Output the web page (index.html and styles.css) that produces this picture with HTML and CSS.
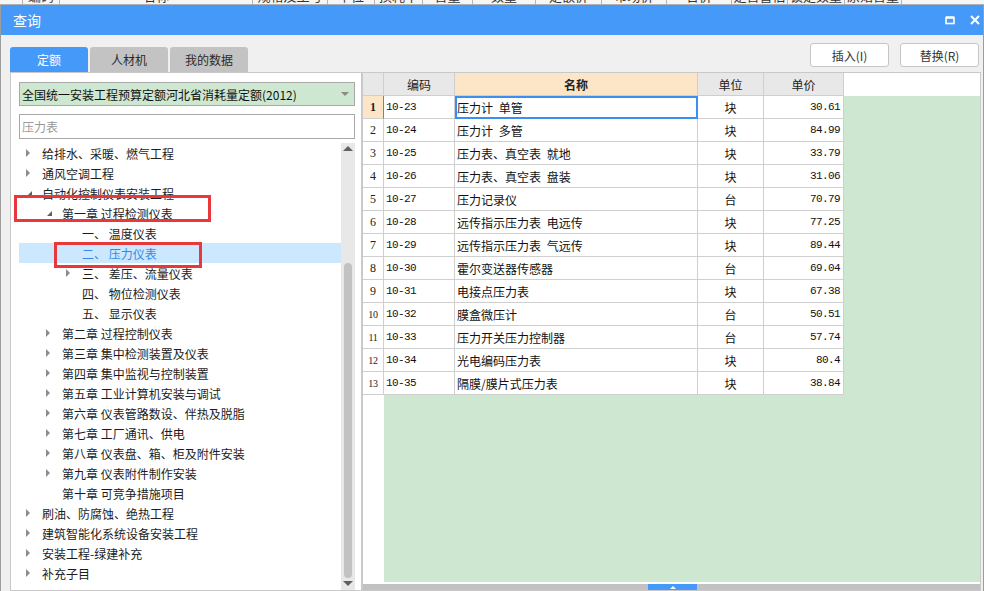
FILE: index.html
```html
<!DOCTYPE html>
<html lang="zh-CN">
<head>
<meta charset="utf-8">
<title>查询</title>
<link rel="stylesheet" href="styles.css">
</head>
<body>
<div class="bgstrip">
  <div class="bgcell"></div>
  <div class="bgcell"><span>编码</span></div>
  <div class="bgcell"><span>名称</span></div>
  <div class="bgcell"><span>规格及型号</span></div>
  <div class="bgcell"><span>单位</span></div>
  <div class="bgcell"><span>损耗率</span></div>
  <div class="bgcell"><span>含量</span></div>
  <div class="bgcell"><span>数量</span></div>
  <div class="bgcell"><span>定额价</span></div>
  <div class="bgcell"><span>市场价</span></div>
  <div class="bgcell"><span>合价</span></div>
  <div class="bgcell"><span>是否暂估</span></div>
  <div class="bgcell"><span>锁定数量</span></div>
  <div class="bgcell"><span>原始含量</span></div>
</div>
<div class="window">
  <div class="titlebar">
    <span class="title">查询</span>
    <div class="winbtns">
      <svg class="ico-max" width="10" height="9" viewBox="0 0 10 9"><rect x="1" y="1.5" width="8" height="6" fill="none" stroke="#fff" stroke-width="1.6"/><line x1="1" y1="1.5" x2="9" y2="1.5" stroke="#fff" stroke-width="2.4"/></svg>
      <svg class="ico-close" width="10" height="10" viewBox="0 0 10 10"><path d="M1 1 L9 9 M9 1 L1 9" stroke="#fff" stroke-width="2" fill="none"/></svg>
    </div>
  </div>
  <div class="content">
    <div class="toolbar">
      <div class="tabs">
        <div class="tab active">定额</div>
        <div class="tab">人材机</div>
        <div class="tab">我的数据</div>
      </div>
      <div class="actions">
        <button class="btn">插入(I)</button>
        <button class="btn">替换(R)</button>
      </div>
    </div>
    <div class="panes">
      <div class="left">
        <div class="select"><span>全国统一安装工程预算定额河北省消耗量定额(2012)</span><i class="caret"></i></div>
        <div class="search">压力表</div>
        <div class="treewrap">
          <div class="tree">
            <div class="row"><i class="tw c"></i>给排水、采暖、燃气工程</div>
            <div class="row"><i class="tw c"></i>通风空调工程</div>
            <div class="row"><i class="tw e"></i>自动化控制仪表安装工程</div>
            <div class="row l1"><i class="tw e"></i>第一章 过程检测仪表</div>
            <div class="row l2"><i class="tw"></i>一、 温度仪表</div>
            <div class="row l2 sel"><i class="tw"></i>二、 压力仪表</div>
            <div class="row l2"><i class="tw c"></i>三、 差压、流量仪表</div>
            <div class="row l2"><i class="tw"></i>四、 物位检测仪表</div>
            <div class="row l2"><i class="tw"></i>五、 显示仪表</div>
            <div class="row l1"><i class="tw c"></i>第二章 过程控制仪表</div>
            <div class="row l1"><i class="tw c"></i>第三章 集中检测装置及仪表</div>
            <div class="row l1"><i class="tw c"></i>第四章 集中监视与控制装置</div>
            <div class="row l1"><i class="tw c"></i>第五章 工业计算机安装与调试</div>
            <div class="row l1"><i class="tw c"></i>第六章 仪表管路数设、伴热及脱脂</div>
            <div class="row l1"><i class="tw c"></i>第七章 工厂通讯、供电</div>
            <div class="row l1"><i class="tw c"></i>第八章 仪表盘、箱、柜及附件安装</div>
            <div class="row l1"><i class="tw c"></i>第九章 仪表附件制作安装</div>
            <div class="row l1"><i class="tw"></i>第十章 可竞争措施项目</div>
            <div class="row"><i class="tw c"></i>刷油、防腐蚀、绝热工程</div>
            <div class="row"><i class="tw c"></i>建筑智能化系统设备安装工程</div>
            <div class="row"><i class="tw c"></i>安装工程-绿建补充</div>
            <div class="row"><i class="tw c"></i>补充子目</div>
          </div>
          <div class="vscroll">
            <i class="arr-up"></i>
            <div class="thumb"></div>
            <i class="arr-down"></i>
          </div>
        </div>
        <div class="mark mark1"></div>
        <div class="mark mark2"></div>
      </div>
      <div class="right">
        <div class="ghead">
          <div class="hc w-n"></div>
          <div class="hc w-c">编码</div>
          <div class="hc w-name name">名称</div>
          <div class="hc w-u">单位</div>
          <div class="hc w-p">单价</div>
          <div class="hfill"></div>
        </div>
        <div class="gbody">
          <div class="rn">
            <div class="cur">1</div>
            <div>2</div><div>3</div><div>4</div><div>5</div><div>6</div><div>7</div><div>8</div><div>9</div>
            <div class="n2">10</div><div class="n2">11</div><div class="n2">12</div><div class="n2">13</div>
          </div>
          <div class="fill">
            <div class="rows">
              <div class="gr"><div class="w-c code">10-23</div><div class="w-name nm focus">压力计 单管</div><div class="w-u un">块</div><div class="w-p pr">30.61</div></div>
              <div class="gr"><div class="w-c code">10-24</div><div class="w-name nm">压力计 多管</div><div class="w-u un">块</div><div class="w-p pr">84.99</div></div>
              <div class="gr"><div class="w-c code">10-25</div><div class="w-name nm">压力表、真空表 就地</div><div class="w-u un">块</div><div class="w-p pr">33.79</div></div>
              <div class="gr"><div class="w-c code">10-26</div><div class="w-name nm">压力表、真空表 盘装</div><div class="w-u un">块</div><div class="w-p pr">31.06</div></div>
              <div class="gr"><div class="w-c code">10-27</div><div class="w-name nm">压力记录仪</div><div class="w-u un">台</div><div class="w-p pr">70.79</div></div>
              <div class="gr"><div class="w-c code">10-28</div><div class="w-name nm">远传指示压力表 电远传</div><div class="w-u un">块</div><div class="w-p pr">77.25</div></div>
              <div class="gr"><div class="w-c code">10-29</div><div class="w-name nm">远传指示压力表 气远传</div><div class="w-u un">块</div><div class="w-p pr">89.44</div></div>
              <div class="gr"><div class="w-c code">10-30</div><div class="w-name nm">霍尔变送器传感器</div><div class="w-u un">台</div><div class="w-p pr">69.04</div></div>
              <div class="gr"><div class="w-c code">10-31</div><div class="w-name nm">电接点压力表</div><div class="w-u un">块</div><div class="w-p pr">67.38</div></div>
              <div class="gr"><div class="w-c code">10-32</div><div class="w-name nm">膜盒微压计</div><div class="w-u un">台</div><div class="w-p pr">50.51</div></div>
              <div class="gr"><div class="w-c code">10-33</div><div class="w-name nm">压力开关压力控制器</div><div class="w-u un">台</div><div class="w-p pr">57.74</div></div>
              <div class="gr"><div class="w-c code">10-34</div><div class="w-name nm">光电编码压力表</div><div class="w-u un">块</div><div class="w-p pr">80.4</div></div>
              <div class="gr"><div class="w-c code">10-35</div><div class="w-name nm">隔膜/膜片式压力表</div><div class="w-u un">块</div><div class="w-p pr">38.84</div></div>
            </div>
          </div>
        </div>
        <div class="hscroll"><div class="hthumb"></div></div>
      </div>
    </div>
  </div>
</div>
</body>
</html>
```
FILE: styles.css
```css
* { box-sizing: border-box; }
html, body { margin: 0; padding: 0; }
body {
  width: 984px;
  height: 591px;
  overflow: hidden;
  background: #f0f0f0;
  font-family: "Noto Sans CJK SC", "Noto Sans", sans-serif;
  font-size: 12px;
  color: #1c1c1c;
}

/* strip of the application behind the dialog */
.bgstrip {
  height: 5px;
  display: flex;
  overflow: hidden;
  background: #f6f6f6;
  border-bottom: 1px solid #b0b0b0;
}
.bgcell {
  flex: none;
  height: 4px;
  overflow: hidden;
  border-right: 1px solid #b5b5b5;
  text-align: center;
}
.bgcell span {
  display: block;
  margin-top: -11px;
  font-size: 13px;
  line-height: 14px;
  color: #333;
}
.bgcell:nth-child(1) { width: 23px; }
.bgcell:nth-child(2) { width: 37px; }
.bgcell:nth-child(3) { width: 193px; }
.bgcell:nth-child(4) { width: 75px; }
.bgcell:nth-child(5) { width: 47px; }
.bgcell:nth-child(6) { width: 48px; }
.bgcell:nth-child(7) { width: 50px; }
.bgcell:nth-child(8) { width: 63px; }
.bgcell:nth-child(9) { width: 66px; }
.bgcell:nth-child(10) { width: 65px; }
.bgcell:nth-child(11) { width: 65px; }
.bgcell:nth-child(12) { width: 56px; }
.bgcell:nth-child(13) { width: 57px; }
.bgcell:nth-child(14) { width: 57px; }

/* dialog */
.window {
  height: 586px;
  display: flex;
  flex-direction: column;
  border-left: 1px solid #9c9c9c;
  border-right: 1px solid #9c9c9c;
  background: #f0f0f0;
}
.titlebar {
  height: 30px;
  flex: none;
  background: #4599f8;
  color: #fff;
  display: flex;
  align-items: center;
  padding: 0 3px 0 12px;
}
.title { font-size: 14px; }
.winbtns {
  margin-left: auto;
  display: flex;
  align-items: center;
  gap: 15px;
}
.winbtns svg { display: block; }

.content {
  flex: 1;
  min-height: 0;
  display: flex;
  flex-direction: column;
  padding: 0 2px 0 9px;
}
.toolbar {
  height: 37px;
  flex: none;
  display: flex;
  justify-content: space-between;
}
.tabs {
  display: flex;
  gap: 2px;
  align-self: flex-end;
}
.tab {
  width: 78px;
  height: 25px;
  display: flex;
  align-items: center;
  justify-content: center;
  background: #c3c3c3;
  color: #2a2a2a;
  border-radius: 3px 3px 0 0;
}
.tab.active { background: #4599f8; color: #fff; }
.actions {
  display: flex;
  gap: 11px;
  margin-top: 8px;
  margin-right: 2px;
  align-self: flex-start;
}
.btn {
  width: 79px;
  height: 24px;
  padding: 0;
  background: #fff;
  border: 1px solid #c6c6c6;
  border-radius: 3px;
  font-family: inherit;
  font-size: 12px;
  color: #333;
}

.panes {
  flex: 1;
  min-height: 0;
  display: flex;
}

/* left pane */
.left {
  width: 352px;
  flex: none;
  position: relative;
  background: #fff;
  border: 1px solid #c9c9c9;
  padding: 9px 6px 0 8px;
  display: flex;
  flex-direction: column;
}
.select {
  height: 24px;
  flex: none;
  display: flex;
  align-items: center;
  padding-left: 2px;
  background: #cee7d0;
  border: 1px solid #a9a9a9;
  color: #111;
}
.caret {
  margin-left: auto;
  margin-right: 5px;
  width: 0;
  height: 0;
  border-top: 4px solid #8a8a8a;
  border-left: 4px solid transparent;
  border-right: 4px solid transparent;
}
.search {
  height: 25px;
  flex: none;
  margin-top: 8px;
  display: flex;
  align-items: center;
  padding-left: 2px;
  border: 1px solid #a9a9a9;
  color: #9a9a9a;
}
.treewrap {
  flex: 1;
  min-height: 0;
  margin-top: 4px;
  display: flex;
}
.tree { flex: 1; }
.row {
  height: 20px;
  display: flex;
  align-items: center;
  white-space: nowrap;
}
.row.l1 { padding-left: 20px; }
.row.l2 { padding-left: 40px; }
.row.sel { background: #cce8ff; color: #3489e6; }
.tw {
  width: 23px;
  height: 20px;
  flex: none;
  position: relative;
}
.tw.c::before {
  content: "";
  position: absolute;
  left: 7px;
  top: 6px;
  border-left: 4px solid #8c8c8c;
  border-top: 4px solid transparent;
  border-bottom: 4px solid transparent;
}
.tw.e::before {
  content: "";
  position: absolute;
  left: 8px;
  top: 8px;
  border-right: 5px solid #5e5e5e;
  border-top: 5px solid transparent;
}

.vscroll {
  width: 14px;
  flex: none;
  background: #e8e8e8;
  display: flex;
  flex-direction: column;
  align-items: center;
}
.arr-up {
  margin-top: 3px;
  width: 0;
  height: 0;
  border-bottom: 5px solid #606060;
  border-left: 5px solid transparent;
  border-right: 5px solid transparent;
}
.thumb {
  width: 8px;
  height: 315px;
  margin-top: 112px;
  background: #c2c2c2;
  border-radius: 4px;
}
.arr-down {
  margin-top: auto;
  margin-bottom: 4px;
  width: 0;
  height: 0;
  border-top: 5px solid #606060;
  border-left: 5px solid transparent;
  border-right: 5px solid transparent;
}

/* red annotation boxes */
.mark {
  position: absolute;
  border: 3px solid #e8383b;
}
.mark1 { left: 3px; top: 122px; width: 197px; height: 27px; }
.mark2 { left: 43px; top: 169px; width: 148px; height: 26px; }

/* right pane */
.right {
  flex: 1;
  min-width: 0;
  display: flex;
  flex-direction: column;
  background: #fff;
  border: 1px solid #c9c9c9;
}
.w-n { width: 21px; }
.w-c { width: 71px; }
.w-name { width: 243px; }
.w-u { width: 66px; }
.w-p { width: 80px; }

.ghead {
  height: 23px;
  flex: none;
  display: flex;
}
.hc {
  flex: none;
  height: 23px;
  display: flex;
  align-items: center;
  justify-content: center;
  background: #e8e8e8;
  border-right: 1px solid #cfcfcf;
  border-bottom: 1px solid #cfcfcf;
  color: #222;
}
.hc.name { background: #fde6c8; font-weight: bold; }
.hfill { flex: 1; }

.gbody {
  flex: 1;
  min-height: 0;
  display: flex;
}
.rn { width: 21px; flex: none; }
.rn div {
  height: 23px;
  display: flex;
  align-items: center;
  justify-content: center;
  border-right: 1px solid #cfcfcf;
  border-bottom: 1px solid #cfcfcf;
  font-family: "Liberation Serif", serif;
  font-size: 12px;
  color: #222;
}
.rn div.n2 { font-size: 10px; letter-spacing: -0.3px; }
.rn div.cur {
  background: #fde6c8;
  font-weight: bold;
  border-right-color: #3b8ff0;
}
.fill {
  flex: 1;
  background: #cee7d0;
  margin-bottom: 2px;
}
.rows { width: 460px; background: #fff; }
.gr { display: flex; height: 23px; }
.gr > div {
  flex: none;
  height: 23px;
  display: flex;
  align-items: center;
  border-right: 1px solid #cfcfcf;
  border-bottom: 1px solid #cfcfcf;
  white-space: nowrap;
  color: #111;
}
.code {
  padding-left: 2px;
  font-family: "Liberation Mono", monospace;
  font-size: 11px;
  letter-spacing: -0.6px;
}
.nm { padding-left: 2px; word-spacing: 3px; }
.nm.focus { outline: 2px solid #3b8ff0; outline-offset: -2px; }
.un { justify-content: center; }
.pr {
  justify-content: flex-end;
  padding-right: 3px;
  font-family: "Liberation Mono", monospace;
  font-size: 11px;
  letter-spacing: -0.6px;
}

.hscroll {
  height: 6px;
  flex: none;
  background: #c2c2c2;
  display: flex;
}
.hthumb {
  width: 49px;
  height: 6px;
  margin-left: 285px;
  background: #4599f8;
  display: flex;
  align-items: center;
  justify-content: center;
}
.hthumb::after {
  content: "";
  width: 0;
  height: 0;
  border-bottom: 3px solid #fff;
  border-left: 3px solid transparent;
  border-right: 3px solid transparent;
}
```
